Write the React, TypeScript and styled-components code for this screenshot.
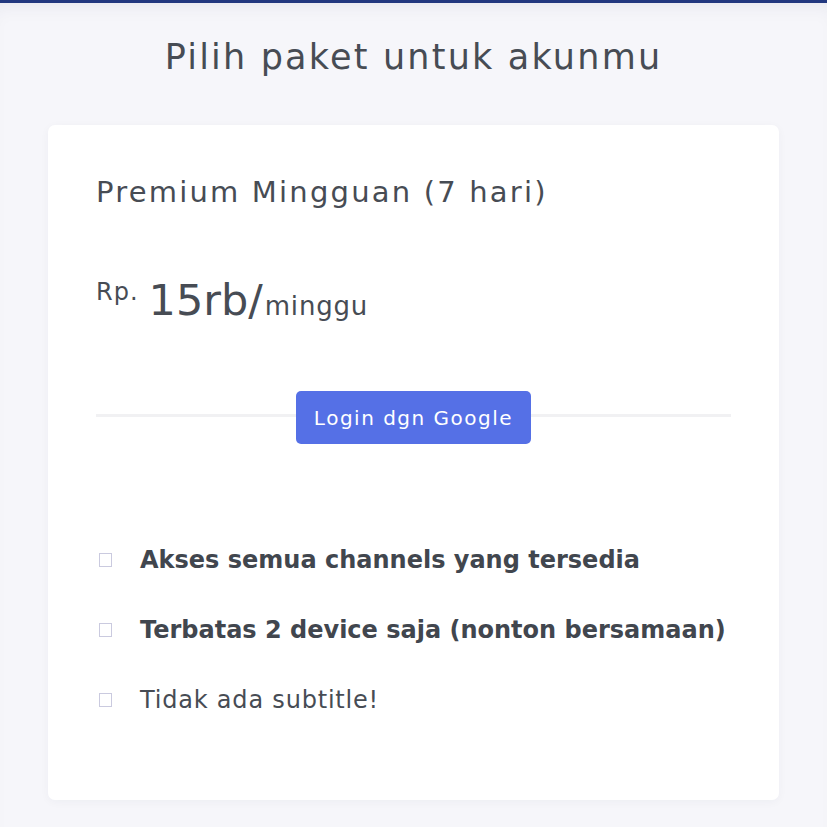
import React from 'react'
import styled, { createGlobalStyle } from 'styled-components'

const GlobalStyle = createGlobalStyle`
  html, body {
    margin: 0;
    padding: 0;
    background: #f6f6fa;
  }
  body {
    font-family: 'DejaVu Sans', 'Open Sans', sans-serif;
    color: #474c54;
  }
`

const TopBar = styled.div`
  height: 3px;
  background: #22387f;
`

const Page = styled.main`
  min-height: 824px;
  padding: 0 48px 28px;
  box-sizing: border-box;
  background: #f6f6fa;
  box-shadow: inset 0 14px 24px -18px rgba(30, 40, 80, 0.12);
`

const Heading = styled.h1`
  margin: 0;
  padding: 30px 0 44px;
  text-align: center;
  font-size: 35px;
  line-height: 48px;
  font-weight: 400;
  letter-spacing: 2.2px;
  color: #474c54;
`

const Card = styled.section`
  background: #ffffff;
  border-radius: 7px;
  box-shadow: 0 2px 10px rgba(30, 40, 80, 0.04);
  padding: 50px 48px 83px;
`

const PlanName = styled.h2`
  margin: 0;
  font-size: 29px;
  line-height: 34px;
  font-weight: 400;
  letter-spacing: 2.2px;
  color: #474c54;
`

const PriceRow = styled.div`
  display: flex;
  align-items: baseline;
  margin-top: 63px;
  height: 56px;
`

const Currency = styled.span`
  align-self: flex-start;
  font-size: 24px;
  line-height: 22px;
  letter-spacing: 1px;
  margin-top: 9px;
  margin-right: 10px;
`

const Amount = styled.span`
  font-size: 43px;
  line-height: 56px;
  font-weight: 400;
`

const Period = styled.span`
  font-size: 26px;
  letter-spacing: 0.8px;
  margin-left: 2px;
`

const Action = styled.div`
  display: grid;
  place-items: center;
  margin-top: 63px;
  > * {
    grid-area: 1 / 1;
  }
`

const Divider = styled.div`
  width: 100%;
  height: 3px;
  background: #f1f1f3;
  margin-top: -5px;
`

const GoogleButton = styled.button`
  height: 53px;
  padding: 0 18px;
  border: none;
  border-radius: 5px;
  background: #5570e6;
  color: #ffffff;
  font-family: inherit;
  font-size: 20px;
  letter-spacing: 1.5px;
  cursor: pointer;
`

const Features = styled.ul`
  list-style: none;
  margin: 99px 0 0;
  padding: 0;
  display: flex;
  flex-direction: column;
  gap: 36px;
`

const Feature = styled.li<{ $bold?: boolean }>`
  display: flex;
  align-items: center;
  font-size: 24px;
  line-height: 34px;
  font-weight: ${p => (p.$bold ? 700 : 400)};
  color: ${p => (p.$bold ? '#41464e' : '#474c54')};
  letter-spacing: ${p => (p.$bold ? '0' : '0.8px')};
`

const Box = styled.span`
  width: 13px;
  height: 14px;
  box-sizing: border-box;
  border: 1.5px solid #cacadf;
  margin: 0 28px 0 3px;
  flex-shrink: 0;
`

const features = [
  { text: 'Akses semua channels yang tersedia', bold: true },
  { text: 'Terbatas 2 device saja (nonton bersamaan)', bold: true },
  { text: 'Tidak ada subtitle!', bold: false },
]

export default function App() {
  return (
    <>
      <GlobalStyle />
      <TopBar />
      <Page>
        <Heading>Pilih paket untuk akunmu</Heading>
        <Card>
          <PlanName>Premium Mingguan (7 hari)</PlanName>
          <PriceRow>
            <Currency>Rp.</Currency>
            <Amount>15rb/</Amount>
            <Period>minggu</Period>
          </PriceRow>
          <Action>
            <Divider />
            <GoogleButton>Login dgn Google</GoogleButton>
          </Action>
          <Features>
            {features.map(f => (
              <Feature key={f.text} $bold={f.bold}>
                <Box />
                {f.text}
              </Feature>
            ))}
          </Features>
        </Card>
      </Page>
    </>
  )
}
